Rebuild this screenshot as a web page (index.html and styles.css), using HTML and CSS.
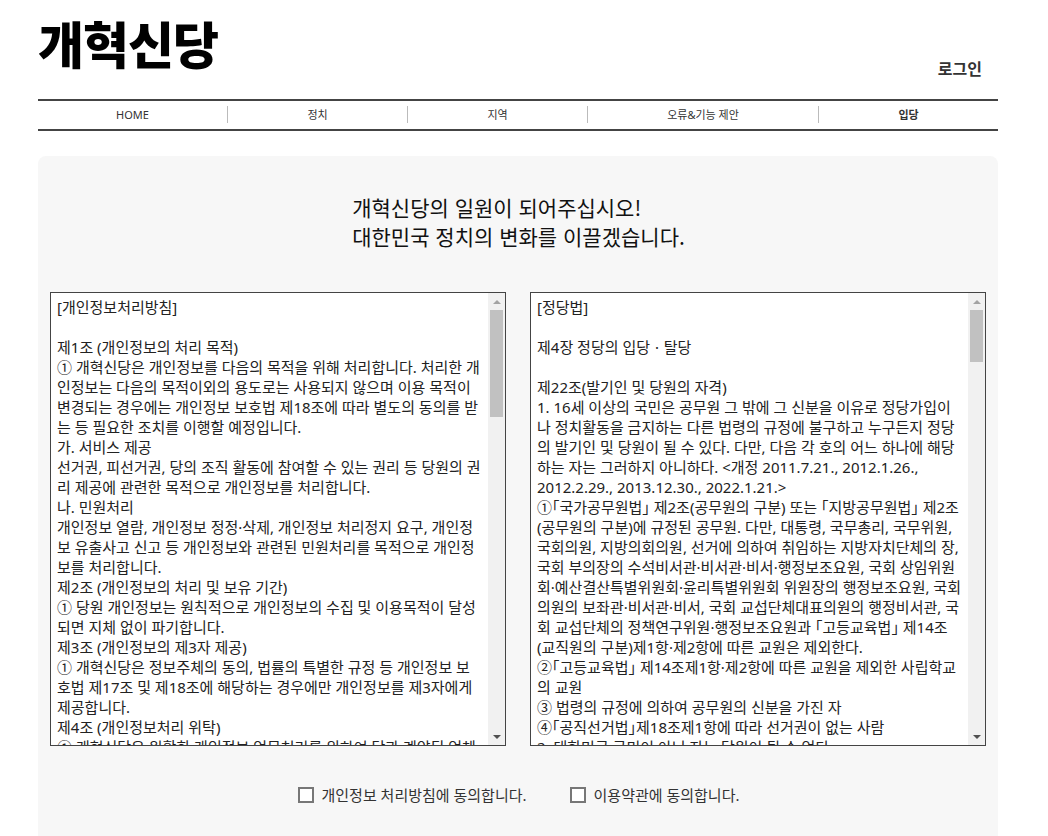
FILE: index.html
```html
<!DOCTYPE html>
<html lang="ko">
    <head>
        <meta charset="UTF-8">
        <meta name="viewport" content="width=device-width, initial-scale=1.0">
        <title>개혁신당 - 입당</title>
        <link rel="stylesheet" href="styles.css">
    </head>
    <body>
        <div class="wrap">

            <!-- Header -->
            <header class="top">
                <h1 class="logo">개혁신당</h1>
                <a class="login" href="#">로그인</a>
            </header>

            <!-- Menu -->
            <nav class="menu">
                <ul>
                    <li>HOME</li>
                    <li>정치</li>
                    <li>지역</li>
                    <li>오류&amp;기능 제안</li>
                    <li class="active">입당</li>
                </ul>
            </nav>

            <!-- Join form -->
            <div class="join-box">
                <div class="join-title">
                    <p>개혁신당의 일원이 되어주십시오!</p>
                    <p>대한민국 정치의 변화를 이끌겠습니다.</p>
                </div>

                <div class="terms">
                    <div class="terms-box">
                        <textarea class="terms-text" readonly>[개인정보처리방침]

제1조 (개인정보의 처리 목적)
① 개혁신당은 개인정보를 다음의 목적을 위해 처리합니다. 처리한 개인정보는 다음의 목적이외의 용도로는 사용되지 않으며 이용 목적이 변경되는 경우에는 개인정보 보호법 제18조에 따라 별도의 동의를 받는 등 필요한 조치를 이행할 예정입니다.
가. 서비스 제공
선거권, 피선거권, 당의 조직 활동에 참여할 수 있는 권리 등 당원의 권리 제공에 관련한 목적으로 개인정보를 처리합니다.
나. 민원처리
개인정보 열람, 개인정보 정정·삭제, 개인정보 처리정지 요구, 개인정보 유출사고 신고 등 개인정보와 관련된 민원처리를 목적으로 개인정보를 처리합니다.
제2조 (개인정보의 처리 및 보유 기간)
① 당원 개인정보는 원칙적으로 개인정보의 수집 및 이용목적이 달성되면 지체 없이 파기합니다.
제3조 (개인정보의 제3자 제공)
① 개혁신당은 정보주체의 동의, 법률의 특별한 규정 등 개인정보 보호법 제17조 및 제18조에 해당하는 경우에만 개인정보를 제3자에게 제공합니다.
제4조 (개인정보처리 위탁)
① 개혁신당은 원활한 개인정보 업무처리를 위하여 당과 계약된 업체에 개인정보 처리업무를 위탁하고 있습니다.
② 개혁신당은 위탁계약 체결 시 개인정보 보호법 제26조에 따라 위탁업무 수행목적 외 개인정보 처리금지, 기술적·관리적 보호조치, 재위탁 제한, 수탁자에 대한 관리·감독, 손해배상 등 책임에 관한 사항을 계약서 등 문서에 명시하고, 수탁자가 개인정보를 안전하게 처리하는지를 감독하고 있습니다.
③ 위탁업무의 내용이나 수탁자가 변경될 경우에는 지체없이 본 개인정보 처리방침을 통하여 공개하도록 하겠습니다.
제5조 (정보주체와 법정대리인의 권리·의무 및 행사방법)
① 정보주체는 개혁신당에 대해 언제든지 다음 각 호의 개인정보 보호 관련 권리를 행사할 수 있습니다.
1. 개인정보 열람요구
2. 오류 등이 있을 경우 정정 요구
3. 삭제요구
4. 처리정지 요구
② 제1항에 따른 권리 행사는 개혁신당에 대해 서면, 전자우편, 모사전송(FAX) 등을 통하여 하실 수 있으며 개혁신당은 이에 대해 지체 없이 조치하겠습니다.
③ 정보주체가 개인정보의 오류 등에 대한 정정 또는 삭제를 요구한 경우에는 개혁신당은 정정 또는 삭제를 완료할 때까지 당해 개인정보를 이용하거나 제공하지 않습니다.
④ 제1항에 따른 권리 행사는 정보주체의 법정대리인이나 위임을 받은 자 등 대리인을 통하여 하실 수 있습니다.
제6조 (처리하는 개인정보 항목)
개혁신당은 다음의 개인정보 항목을 처리하고 있습니다.
1. 필수항목: 성명, 생년월일, 성별, 주소, 휴대전화번호, 전자우편
2. 선택항목: 직업, 학력, 경력
제7조 (개인정보의 파기)
① 개혁신당은 개인정보 보유기간의 경과, 처리목적 달성 등 개인정보가 불필요하게 되었을 때에는 지체없이 해당 개인정보를 파기합니다.
② 개인정보 파기의 절차 및 방법은 다음과 같습니다.
1. 파기절차: 개혁신당은 파기 사유가 발생한 개인정보를 선정하고, 개인정보 보호책임자의 승인을 받아 개인정보를 파기합니다.
2. 파기방법: 전자적 파일 형태로 기록·저장된 개인정보는 기록을 재생할 수 없도록 파기하며, 종이 문서에 기록·저장된 개인정보는 분쇄기로 분쇄하거나 소각하여 파기합니다.
제8조 (개인정보의 안전성 확보조치)
개혁신당은 개인정보의 안전성 확보를 위해 관리적·기술적·물리적 조치를 취하고 있습니다.
제9조 (개인정보 보호책임자)
개혁신당은 개인정보 처리에 관한 업무를 총괄해서 책임지고, 정보주체의 불만처리 및 피해구제 등을 위하여 개인정보 보호책임자를 지정하고 있습니다.
제10조 (개인정보 처리방침 변경)
이 개인정보 처리방침은 시행일로부터 적용되며, 변경내용의 추가, 삭제 및 정정이 있는 경우에는 변경사항의 시행 7일 전부터 공지사항을 통하여 고지할 것입니다.</textarea>
                        <div class="scrollbar">
                            <span class="sb-btn sb-up"></span>
                            <span class="sb-track"><span class="sb-thumb" style="height: 107px;"></span></span>
                            <span class="sb-btn sb-down"></span>
                        </div>
                    </div>
                    <div class="terms-box">
                        <textarea class="terms-text law" readonly>[정당법]

제4장 정당의 입당ㆍ탈당

제22조(발기인 및 당원의 자격)
1. 16세 이상의 국민은 공무원 그 밖에 그 신분을 이유로 정당가입이나 정치활동을 금지하는 다른 법령의 규정에 불구하고 누구든지 정당의 발기인 및 당원이 될 수 있다. 다만, 다음 각 호의 어느 하나에 해당하는 자는 그러하지 아니하다. &lt;개정 2011.7.21., 2012.1.26., 2012.2.29., 2013.12.30., 2022.1.21.&gt;
①「국가공무원법」 제2조(공무원의 구분) 또는 「지방공무원법」 제2조(공무원의 구분)에 규정된 공무원. 다만, 대통령, 국무총리, 국무위원, 국회의원, 지방의회의원, 선거에 의하여 취임하는 지방자치단체의 장, 국회 부의장의 수석비서관·비서관·비서·행정보조요원, 국회 상임위원회·예산결산특별위원회·윤리특별위원회 위원장의 행정보조요원, 국회의원의 보좌관·비서관·비서, 국회 교섭단체대표의원의 행정비서관, 국회 교섭단체의 정책연구위원·행정보조요원과 「고등교육법」 제14조(교직원의 구분)제1항·제2항에 따른 교원은 제외한다.
②「고등교육법」 제14조제1항·제2항에 따른 교원을 제외한 사립학교의 교원
③ 법령의 규정에 의하여 공무원의 신분을 가진 자
④「공직선거법」제18조제1항에 따라 선거권이 없는 사람
2. 대한민국 국민이 아닌 자는 당원이 될 수 없다.

제23조(입당)
① 당원이 되고자 하는 자는 시·도당 또는 그 창당준비위원회에 입당원서를 제출하여야 한다.
② 제1항의 입당원서를 접수한 시·도당은 당원자격 심사기관의 심사를 거쳐 입당허가 여부를 결정하여야 하며, 입당허가가 된 때에는 당원명부에 등재하여야 한다.

제24조(당원명부)
① 시·도당은 당원명부를 비치하여야 한다.
② 당원명부에 등재되지 아니한 자는 당원으로 인정하지 아니한다.

제25조(탈당)
당원이 탈당하고자 할 때에는 탈당신고서를 소속 시·도당에 제출하여야 한다.</textarea>
                        <div class="scrollbar">
                            <span class="sb-btn sb-up"></span>
                            <span class="sb-track"><span class="sb-thumb" style="height: 52px;"></span></span>
                            <span class="sb-btn sb-down"></span>
                        </div>
                    </div>
                </div>

                <div class="agree">
                    <label><input type="checkbox"> 개인정보 처리방침에 동의합니다.</label>
                    <label><input type="checkbox"> 이용약관에 동의합니다.</label>
                </div>
            </div>

        </div>
    </body>
</html>
```

FILE: styles.css
```css
/* 입당 페이지 */
body {
    margin: 0;
    background-color: #fff;
    color: #222;
    font-family: "Noto Sans", "Noto Sans CJK KR", sans-serif;
}
p {
    margin: 0;
}
.wrap {
    width: 960px;
    margin-left: 38px;
}

/* header */
.top {
    display: flex;
    justify-content: space-between;
    align-items: flex-start;
    height: 99px;
}
.logo {
    margin: 12px 0 0 0;
    font-family: "Noto Sans CJK KR", sans-serif;
    font-size: 50px;
    font-weight: 900;
    line-height: 60px;
    letter-spacing: -1px;
    color: #000;
}
.login {
    margin: 56px 16px 0 0;
    font-family: "Noto Sans CJK KR", sans-serif;
    font-size: 16px;
    font-weight: 700;
    color: #333;
    text-decoration: none;
}

/* menu */
.menu {
    border-top: 2px solid #444;
    border-bottom: 2px solid #444;
}
.menu ul {
    display: grid;
    grid-template-columns: 189px 180px 180px 231px 180px;
    align-items: center;
    height: 26px;
    margin: 0;
    padding: 0 0 2px 0;
    list-style: none;
}
.menu li {
    text-align: center;
    font-size: 11px;
    line-height: 17px;
    color: #333;
    border-left: 1px solid #bbb;
}
.menu li:first-child {
    border-left: none;
}
.menu li.active {
    font-weight: bold;
}

/* join box */
.join-box {
    margin-top: 25px;
    background-color: #f7f7f7;
    border-radius: 8px;
    padding: 37px 11px 60px 12px;
}
.join-title {
    width: fit-content;
    margin: 0 auto;
    font-family: "Noto Sans CJK KR", sans-serif;
    font-size: 21px;
    line-height: 29px;
    color: #111;
}
.terms {
    display: flex;
    gap: 24px;
    margin-top: 41px;
}
.terms-box {
    display: flex;
    box-sizing: border-box;
    width: 456px;
    height: 454px;
    border: 1px solid #444;
    background-color: #fff;
}
.terms-text {
    flex: 1;
    margin: 0;
    padding: 4px 6px;
    border: none;
    outline: none;
    background-color: #fff;
    color: #222;
    font-family: "Noto Sans", "Noto Sans CJK KR", sans-serif;
    font-size: 15px;
    line-height: 20px;
    resize: none;
    overflow: hidden;
}
.terms-text.law {
    font-feature-settings: "halt";
}

/* scrollbar */
.scrollbar {
    display: flex;
    flex-direction: column;
    width: 17px;
    background-color: #f1f1f1;
}
.sb-btn {
    display: flex;
    align-items: center;
    justify-content: center;
    height: 17px;
}
.sb-up::after,
.sb-down::after {
    content: "";
    width: 0;
    height: 0;
    border-left: 4px solid transparent;
    border-right: 4px solid transparent;
}
.sb-up::after {
    border-bottom: 4px solid #a3a3a3;
}
.sb-down::after {
    border-top: 4px solid #505050;
}
.sb-track {
    flex: 1;
    padding: 0 2px;
}
.sb-thumb {
    display: block;
    background-color: #c1c1c1;
}

/* agree */
.agree {
    display: flex;
    justify-content: center;
    gap: 43px;
    margin-top: 39px;
}
.agree label {
    display: flex;
    align-items: center;
    gap: 8px;
    font-size: 15px;
    line-height: 20px;
    color: #333;
}
.agree input {
    appearance: none;
    width: 16px;
    height: 16px;
    margin: 0;
    border: 2px solid #777;
    background-color: #fff;
}
```
